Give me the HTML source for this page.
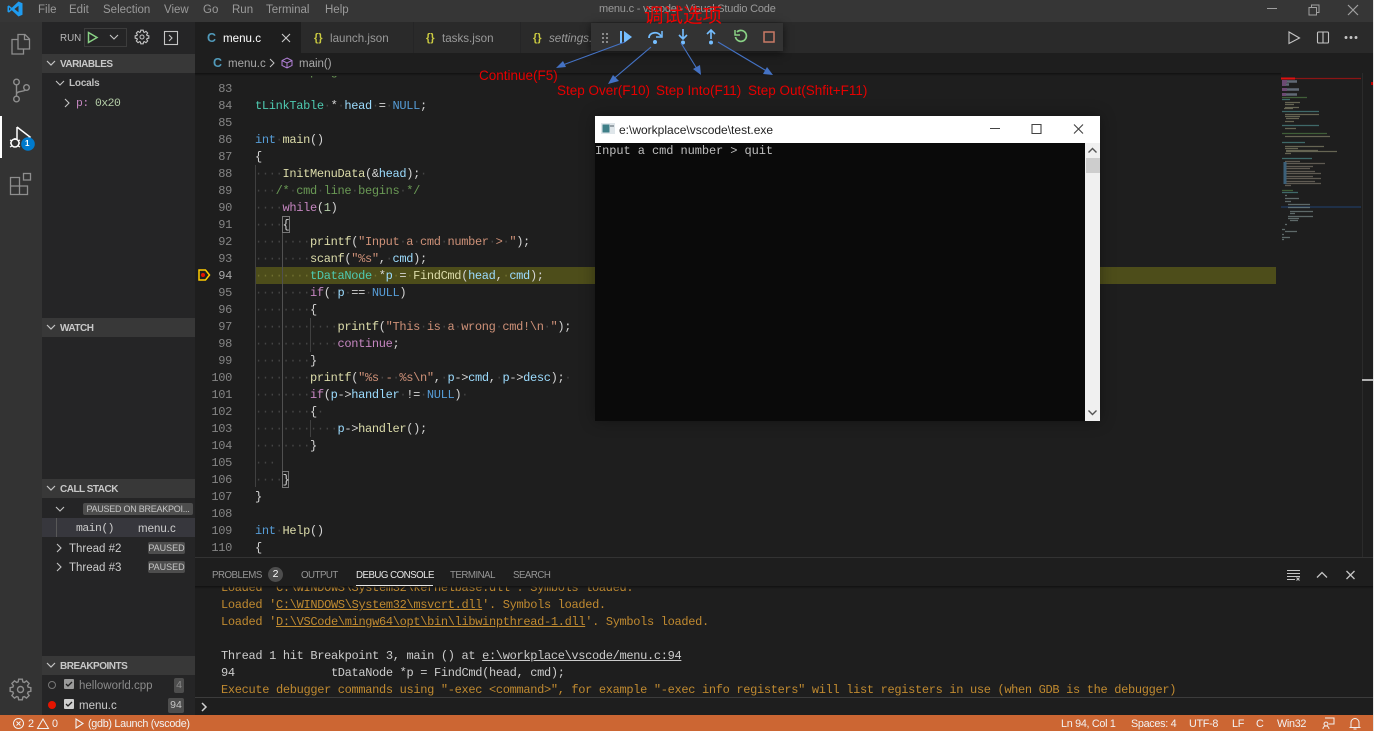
<!DOCTYPE html>
<html><head><meta charset="utf-8"><title>menu.c - vscode - Visual Studio Code</title>
<style>
html,body{margin:0;padding:0;width:1374px;height:731px;overflow:hidden;background:#1e1e1e}
body{position:relative;font-family:"Liberation Sans","Noto Sans CJK SC",sans-serif;color:#ccc}
.a{position:absolute}
.t{position:absolute;white-space:pre;line-height:16px}
svg{position:absolute;overflow:visible}
.m{font-family:"Liberation Mono",monospace;font-size:12px;letter-spacing:-.33px;line-height:17px;white-space:pre}
.w{color:#454545}.ty{color:#4ec9b0}.k{color:#569cd6}.c{color:#c586c0}.f{color:#dcdcaa}.v{color:#9cdcfe}.s{color:#ce9178}.g{color:#6a9955}.n{color:#b5cea8}
.hd{position:absolute;left:42px;width:153px;height:19px;background:#383838;font-size:10px;letter-spacing:-.5px;font-weight:bold;line-height:19px;color:#c8c8c8}
.hd span{position:absolute;left:18px;top:.5px}
.mn{position:absolute;top:1.500px;font-size:11.500px;line-height:16px;color:#9a9a9a}
.o{color:#c08a30}
.o u,.l u{text-decoration:underline}
.l{color:#cccccc}
.st{position:absolute;top:717px;font-size:10.800px;letter-spacing:-.3px;line-height:15px;color:#f2f2f2;white-space:pre}
.pt{position:absolute;top:568px;font-size:9.700px;letter-spacing:-.5px;line-height:15px;color:#969696;white-space:pre}
.badge{position:absolute;background:#4d4d4d;color:#c4c4c4;font-size:9px;line-height:12px;text-align:center;border-radius:2px;white-space:pre}
.tb{font-size:11.600px}
</style></head><body>

<!-- title bar -->
<div class="a" style="left:0;top:0;width:1374px;height:22px;background:#363636"></div>
<svg style="left:7px;top:1px" width="16" height="16" viewBox="0 0 16 16"><path d="M11.500 .5 L15.500 2.300 V13.700 L11.500 15.500 L4.800 9.300 L1.900 11.600 L.5 10.800 V5.200 L1.900 4.400 L4.800 6.700 Z M11.500 4.800 L7.400 8 L11.500 11.200 Z M2 6.300 V9.700 L3.700 8 Z" fill="#1f9cf0" fill-rule="evenodd"/></svg>
<div class="mn" style="left:38px">File</div><div class="mn" style="left:69px">Edit</div><div class="mn" style="left:103px">Selection</div><div class="mn" style="left:164px">View</div><div class="mn" style="left:203px">Go</div><div class="mn" style="left:232px">Run</div><div class="mn" style="left:266px">Terminal</div><div class="mn" style="left:325px">Help</div>
<div class="t" style="left:599px;top:1px;font-size:11px;letter-spacing:-.2px;color:#9a9a9a">menu.c - vscode - Visual Studio Code</div>
<svg style="left:1266px;top:3px" width="100" height="14" fill="none" stroke="#a0a0a0"><path d="M1 5.500H11"/><path d="M43 4.500h7.500v7.500H43z M45.500 4.500V2h7.500v7.500h-2.500"/><path d="M82 2L92 12M92 2L82 12" stroke-width="1.200"/></svg>

<!-- activity bar -->
<div class="a" style="left:0;top:22px;width:42px;height:693px;background:#333"></div>
<div class="a" style="left:0;top:116px;width:2px;height:42px;background:#fff"></div>
<svg style="left:10px;top:33px" width="22" height="22" fill="none" stroke="#8e8e8e" stroke-width="1.300"><path d="M8 1.500h7l4.500 4.500V16H8z M14.500 1.500V6.500H19.500"/><path d="M8 6.500H2v14.500h11.500V16"/></svg>
<svg style="left:12px;top:78px" width="20" height="24" fill="none" stroke="#8e8e8e" stroke-width="1.400"><circle cx="4.500" cy="4" r="2.800"/><circle cx="4.500" cy="21" r="2.800"/><circle cx="14.500" cy="9.500" r="2.800"/><path d="M4.500 7V18M4.500 16C5 12.500 12 14 13.500 12"/></svg>
<svg style="left:9px;top:125px" width="30" height="30" fill="none"><path d="M8 2V14M8 2L21 12 L17 15" stroke="#fff" stroke-width="1.500"/><circle cx="6" cy="18" r="4" stroke="#fff" stroke-width="1.500"/><path d="M1 15l2 1M1 18h1M1 22l2-1M11 15l-2 1M11 18h-1M11 22l-2-1M6 13v2" stroke="#fff" stroke-width="1.200"/><circle cx="19" cy="19" r="6.800" fill="#007acc"/></svg>
<div class="t" style="left:25px;top:136px;width:6px;font-size:8px;font-weight:bold;color:#fff">1</div>
<svg style="left:10px;top:172px" width="23" height="23" fill="none" stroke="#8e8e8e" stroke-width="1.300"><path d="M.5 5.500h9v17h-9zM.5 14h17v8.500h-8"/><rect x="13.500" y="1.500" width="7" height="6.500"/></svg>
<svg style="left:9px;top:678px" width="23" height="23" viewBox="0 0 23 23" fill="none" stroke="#8e8e8e" stroke-width="1.400"><circle cx="11.500" cy="11.500" r="3"/><polygon transform="translate(11.500 11.500)" points="-1.820,-10.340 1.820,-10.340 2.340,-7.650 3.760,-7.060 6.020,-8.600 8.600,-6.020 7.060,-3.760 7.650,-2.340 10.340,-1.820 10.340,1.820 7.650,2.340 7.060,3.760 8.600,6.020 6.020,8.600 3.760,7.060 2.340,7.650 1.820,10.340 -1.820,10.340 -2.340,7.650 -3.760,7.060 -6.020,8.600 -8.600,6.020 -7.060,3.760 -7.650,2.340 -10.340,1.820 -10.340,-1.820 -7.650,-2.340 -7.060,-3.760 -8.600,-6.020 -6.020,-8.600 -3.760,-7.060 -2.340,-7.650"/></svg>

<!-- sidebar -->
<div class="a" style="left:42px;top:22px;width:153px;height:693px;background:#252526"></div>
<div class="t" style="left:60px;top:31px;font-size:9.800px;color:#b8b8b8">RUN</div>
<div class="a" style="left:84px;top:28px;width:43px;height:19px;border:1px solid #3c3c3c;box-sizing:border-box"></div>
<svg style="left:87px;top:31px" width="12" height="13" fill="none"><path d="M1.500 1.500V11.500L10 6.500Z" stroke="#89d185" stroke-width="1.500"/></svg>
<svg style="left:109px;top:34px" width="10" height="7" fill="none"><path d="M1 1L5 5L9 1" stroke="#c5c5c5" stroke-width="1.100"/></svg>
<svg style="left:135px;top:30px" width="14" height="14" fill="none" stroke="#c5c5c5"><circle cx="7" cy="7" r="2"/><polygon transform="translate(7 7) scale(.66)" stroke-width="1.700" points="-1.820,-10.340 1.820,-10.340 2.340,-7.650 3.760,-7.060 6.020,-8.600 8.600,-6.020 7.060,-3.760 7.650,-2.340 10.340,-1.820 10.340,1.820 7.650,2.340 7.060,3.760 8.600,6.020 6.020,8.600 3.760,7.060 2.340,7.650 1.820,10.340 -1.820,10.340 -2.340,7.650 -3.760,7.060 -6.020,8.600 -8.600,6.020 -7.060,3.760 -7.650,2.340 -10.340,1.820 -10.340,-1.820 -7.650,-2.340 -7.060,-3.760 -8.600,-6.020 -6.020,-8.600 -3.760,-7.060 -2.340,-7.650"/></svg>
<svg style="left:164px;top:31px" width="14" height="14" fill="none" stroke="#c5c5c5" stroke-width="1.100"><rect x=".5" y=".5" width="13" height="13"/><path d="M5 4l3 3-3 3"/></svg>

<div class="hd" style="top:54px"><span>VARIABLES</span></div>
<svg style="left:46px;top:60px" width="10" height="7" fill="none"><path d="M1 1L5 5L9 1" stroke="#c5c5c5" stroke-width="1.200"/></svg>
<svg style="left:55px;top:80px" width="10" height="7" fill="none"><path d="M1 1L5 5L9 1" stroke="#c5c5c5" stroke-width="1.100"/></svg>
<div class="t" style="left:69px;top:76px;font-size:10px;letter-spacing:-.2px;font-weight:bold;color:#c0c0c0">Locals</div>
<svg style="left:64px;top:98px" width="7" height="10" fill="none"><path d="M1 1L5 5L1 9" stroke="#c5c5c5" stroke-width="1.100"/></svg>
<div class="t" style="left:76px;top:96px;font-family:'Liberation Mono',monospace;font-size:11.400px;letter-spacing:-.5px"><span style="color:#c586c0">p:</span> <span style="color:#b5cea8">0x20</span></div>

<div class="hd" style="top:318px"><span>WATCH</span></div>
<svg style="left:46px;top:324px" width="10" height="7" fill="none"><path d="M1 1L5 5L9 1" stroke="#c5c5c5" stroke-width="1.200"/></svg>

<div class="hd" style="top:479px"><span>CALL STACK</span></div>
<svg style="left:46px;top:485px" width="10" height="7" fill="none"><path d="M1 1L5 5L9 1" stroke="#c5c5c5" stroke-width="1.200"/></svg>
<svg style="left:55px;top:506px" width="10" height="7" fill="none"><path d="M1 1L5 5L9 1" stroke="#c5c5c5" stroke-width="1.100"/></svg>
<div class="badge" style="left:83px;top:503px;width:110px;height:12px;letter-spacing:-.25px">PAUSED ON BREAKPOI...</div>
<div class="a" style="left:42px;top:518px;width:153px;height:19px;background:#37373d"></div>
<div class="a" style="left:56px;top:518px;width:1px;height:19px;background:#585858"></div>
<div class="t" style="left:76px;top:521px;font-family:'Liberation Mono',monospace;font-size:11.400px;letter-spacing:-.5px;color:#ccc">main()</div>
<div class="t" style="left:138px;top:521px;font-size:11.500px;color:#ccc">menu.c</div>
<svg style="left:56px;top:543px" width="7" height="10" fill="none"><path d="M1 1L5 5L1 9" stroke="#c5c5c5" stroke-width="1.100"/></svg>
<svg style="left:56px;top:562px" width="7" height="10" fill="none"><path d="M1 1L5 5L1 9" stroke="#c5c5c5" stroke-width="1.100"/></svg>
<div class="t" style="left:69px;top:541px;font-size:11.500px;color:#ccc">Thread #2</div>
<div class="t" style="left:69px;top:560px;font-size:11.500px;color:#ccc">Thread #3</div>
<div class="badge" style="left:148px;top:542px;width:37px;height:12px">PAUSED</div>
<div class="badge" style="left:148px;top:561px;width:37px;height:12px">PAUSED</div>

<div class="hd" style="top:656px"><span>BREAKPOINTS</span></div>
<svg style="left:46px;top:662px" width="10" height="7" fill="none"><path d="M1 1L5 5L9 1" stroke="#c5c5c5" stroke-width="1.200"/></svg>
<div class="a" style="left:48px;top:681px;width:8px;height:8px;border:1px solid #777;border-radius:50%;box-sizing:border-box"></div>
<div class="a" style="left:48px;top:701px;width:8px;height:8px;background:#e51400;border-radius:50%"></div>
<svg style="left:64px;top:679px" width="11" height="31"><rect width="10" height="10" rx="1" fill="#9a9a9a"/><path d="M2 5l2 2 4-4" stroke="#222" fill="none" stroke-width="1.300"/><rect y="20" width="10" height="10" rx="1" fill="#cfcfcf"/><path d="M2 25l2 2 4-4" stroke="#222" fill="none" stroke-width="1.300"/></svg>
<div class="t" style="left:79px;top:678px;font-size:11.500px;color:#8b8b8b">helloworld.cpp</div>
<div class="t" style="left:79px;top:698px;font-size:11.500px;color:#ccc">menu.c</div>
<div class="badge" style="left:174px;top:678px;width:10px;height:15px;line-height:15px;font-size:10.500px;color:#8b8b8b">4</div>
<div class="badge" style="left:168px;top:698px;width:16px;height:15px;line-height:15px;font-size:10.500px">94</div>

<!-- tabs -->
<div class="a" style="left:195px;top:22px;width:1179px;height:31px;background:#2a2a2a"></div>
<div class="a" style="left:195px;top:22px;width:106px;height:31px;background:#1e1e1e"></div>
<div class="t" style="left:207px;top:30px;font-size:12.500px;font-weight:bold;color:#519aba">C</div>
<div class="t tb" style="left:223px;top:30.500px;color:#fff">menu.c</div>
<svg style="left:281px;top:33px" width="10" height="10" fill="none" stroke="#ccc" stroke-width="1.100"><path d="M1 1L9 9M9 1L1 9"/></svg>
<div class="t" style="left:314px;top:30px;font-size:11px;font-weight:bold;color:#cbcb41">{}</div>
<div class="t tb" style="left:330px;top:30.500px;color:#9a9a9a">launch.json</div>
<div class="a" style="left:413px;top:22px;width:1px;height:31px;background:#252526"></div>
<div class="t" style="left:426px;top:30px;font-size:11px;font-weight:bold;color:#cbcb41">{}</div>
<div class="t tb" style="left:442px;top:30.500px;color:#9a9a9a">tasks.json</div>
<div class="a" style="left:520px;top:22px;width:1px;height:31px;background:#252526"></div>
<div class="t" style="left:533px;top:30px;font-size:11px;font-weight:bold;color:#cbcb41">{}</div>
<div class="t tb" style="left:549px;top:30.500px;font-style:italic;color:#9a9a9a">settings.json</div>
<svg style="left:1288px;top:31px" width="70" height="14" fill="none" stroke="#c5c5c5" stroke-width="1.100"><path d="M1 1V12.500L11.500 7Z"/><rect x="29.500" y="1" width="11" height="11" rx="1"/><path d="M35 1V12"/><circle cx="58" cy="6.500" r=".9" fill="#c5c5c5"/><circle cx="63" cy="6.500" r=".9" fill="#c5c5c5"/><circle cx="68" cy="6.500" r=".9" fill="#c5c5c5"/></svg>

<!-- breadcrumb -->
<div class="a" style="left:195px;top:53px;width:1179px;height:20px;background:#1e1e1e"></div>
<div class="t" style="left:213px;top:55px;font-size:12.500px;font-weight:bold;color:#519aba">C</div>
<div class="t" style="left:228px;top:56px;font-size:11.500px;color:#a8a8a8">menu.c</div>
<svg style="left:269px;top:58px" width="7" height="10" fill="none"><path d="M1 1L5 5L1 9" stroke="#c5c5c5"/></svg>
<svg style="left:281px;top:57px" width="12" height="12" fill="none" stroke="#b180d7"><path d="M6 1L11 3.500V8.500L6 11L1 8.500V3.500Z M1 3.500L6 6L11 3.500M6 6V11"/></svg>
<div class="t" style="left:299px;top:56px;font-size:11.500px;color:#a8a8a8">main()</div>

<!-- editor -->
<div class="a" style="left:195px;top:73px;width:1179px;height:484px;background:#1e1e1e;overflow:hidden">
  <div class="a" style="left:60px;top:194px;width:1021px;height:17px;background:#4d4d1a"></div>
  <div class="a" style="left:60px;top:92px;width:1px;height:322px;background:#404040"></div>
  <div class="a" style="left:87px;top:143px;width:1px;height:271px;background:#505050"></div>
  <div class="a" style="left:115px;top:245px;width:1px;height:34px;background:#404040"></div>
  <div class="a" style="left:115px;top:347px;width:1px;height:17px;background:#404040"></div>
  <div class="a" style="left:87px;top:143px;width:8px;height:17px;box-sizing:border-box;border:1px solid #777"></div>
  <div class="a" style="left:87px;top:398px;width:7px;height:17px;box-sizing:border-box;border:1px solid #777"></div>
  <div class="a m" style="left:0;top:-9px;width:37px;text-align:right;color:#858585">82
83
84
85
86
87
88
89
90
91
92
93
<span style="color:#a8a8a8">94</span>
95
96
97
98
99
100
101
102
103
104
105
106
107
108
109
110
111</div>
  <div class="a m" style="left:60px;top:-9px;color:#d4d4d4"><span class="g">/*·menu·program·*/</span>

<span class="ty">tLinkTable</span><span class="w">·</span>*<span class="w">·</span><span class="v">head</span><span class="w">·</span>=<span class="w">·</span><span class="k">NULL</span>;

<span class="k">int</span><span class="w">·</span><span class="f">main</span>()
{
<span class="w">····</span><span class="f">InitMenuData</span>(&amp;<span class="v">head</span>);<span class="w">·</span>
<span class="w">···</span><span class="g">/*</span><span class="w">·</span><span class="g">cmd</span><span class="w">·</span><span class="g">line</span><span class="w">·</span><span class="g">begins</span><span class="w">·</span><span class="g">*/</span>
<span class="w">····</span><span class="c">while</span>(<span class="n">1</span>)
<span class="w">····</span>{
<span class="w">········</span><span class="f">printf</span>(<span class="s">"Input</span><span class="w">·</span><span class="s">a</span><span class="w">·</span><span class="s">cmd</span><span class="w">·</span><span class="s">number</span><span class="w">·</span><span class="s">&gt;</span><span class="w">·</span><span class="s">"</span>);
<span class="w">········</span><span class="f">scanf</span>(<span class="s">"%s"</span>,<span class="w">·</span><span class="v">cmd</span>);
<span class="w" style="color:#707030">········</span><span class="ty">tDataNode</span><span class="w" style="color:#707030">·</span>*<span class="v">p</span><span class="w" style="color:#707030">·</span>=<span class="w" style="color:#707030">·</span><span class="f">FindCmd</span>(<span class="v">head</span>,<span class="w" style="color:#707030">·</span><span class="v">cmd</span>);
<span class="w">········</span><span class="c">if</span>(<span class="w">·</span><span class="v">p</span><span class="w">·</span>==<span class="w">·</span><span class="k">NULL</span>)
<span class="w">········</span>{
<span class="w">············</span><span class="f">printf</span>(<span class="s">"This</span><span class="w">·</span><span class="s">is</span><span class="w">·</span><span class="s">a</span><span class="w">·</span><span class="s">wrong</span><span class="w">·</span><span class="s">cmd!\n</span><span class="w">·</span><span class="s">"</span>);
<span class="w">············</span><span class="c">continue</span>;
<span class="w">········</span>}
<span class="w">········</span><span class="f">printf</span>(<span class="s">"%s</span><span class="w">·</span><span class="s">-</span><span class="w">·</span><span class="s">%s\n"</span>,<span class="w">·</span><span class="v">p</span>-&gt;<span class="v">cmd</span>,<span class="w">·</span><span class="v">p</span>-&gt;<span class="v">desc</span>);<span class="w">·</span>
<span class="w">········</span><span class="c">if</span>(<span class="v">p</span>-&gt;<span class="v">handler</span><span class="w">·</span>!=<span class="w">·</span><span class="k">NULL</span>)<span class="w">·</span>
<span class="w">········</span>{<span class="w">·</span>
<span class="w">············</span><span class="v">p</span>-&gt;<span class="f">handler</span>();
<span class="w">········</span>}
<span class="w">···</span>
<span class="w">····</span>}
}

<span class="k">int</span><span class="w">·</span><span class="f">Help</span>()
{
</div>
  <!-- overview ruler -->
  <div class="a" style="left:1167px;top:0;width:1px;height:484px;background:#2b2b2b"></div>
  <div class="a" style="left:1167px;top:306px;width:12px;height:2px;background:#b0b0b0"></div>
  <div class="a" style="left:1176px;top:9px;width:3px;height:3px;background:#c00000"></div>
  <div class="a" style="left:0;top:0;width:1086px;height:3px;background:linear-gradient(#111,#1e1e1e)"></div>
</div>
<!-- bp arrow -->
<svg style="left:198px;top:269px" width="13" height="12" fill="none"><path d="M1 1H7.500L11.500 6L7.500 11H1Z" stroke="#ffcc00" stroke-width="1.500"/><circle cx="5" cy="6" r="2" fill="#e51400"/></svg>

<!-- minimap -->
<svg style="left:0;top:0" width="1374" height="731" fill="none" stroke-width="1.300">
<path d="M1281 78.500H1361" stroke="#8a1515"/><path d="M1281 78.500H1295" stroke="#e01010" stroke-width="2"/>
<rect x="1281" y="206" width="80" height="2" fill="#1f3048" stroke="none"/>
<g opacity=".7">
<path d="M1282 81.500h5M1282 84.500h4M1282 89.500h5M1282 94.500h4" stroke="#8d5d96" stroke-width="3"/>
<path d="M1287 81.500h10M1286 84.500h3M1287 89.500h12M1286 94.500h11" stroke="#7d8a9a" stroke-width="2.500"/>
<path d="M1282 97.500h25M1282 133.500h45M1282 190.500h11" stroke="#4f7a43"/>
<path d="M1282 99.500h8M1282 111.500h37M1282 125.500h37M1282 142.500h23M1282 158.500h30M1282 192.500h16" stroke="#4e8a8a"/>
<path d="M1285 102.500h15M1285 104.500h9M1285 107.500h14M1284 108.500h9M1285 114.500h34M1285 116.500h15M1286 118.500h13M1285 121.500h9M1285 128.500h11M1285 136.500h45M1285 146.500h39M1285 148.500h13M1286 150.500h32M1286 151.500h51M1285 153.500h6" stroke="#85846a"/>
<path d="M1285 161.500h15M1285 163.500h40M1285 166.500h28M1285 168.500h25M1285 171.500h30M1285 173.500h36M1285 176.500h28M1285 178.500h36M1285 181.500h30M1285 183.500h36M1285 185.500h6" stroke="#7b7468"/>
<path d="M1285 162v22" stroke="#4a7ca0" stroke-width="3"/>
<path d="M1285 195.500h2M1285 198.500h14M1285 201.500h6M1288 204.500h22M1288 207.500h22M1290 211.500h23M1290 213.500h5M1288 216.500h25M1288 218.500h11M1290 220.500h8M1285 224.500h2M1282 229.500h3M1285 231.500h12M1282 234.500h2M1282 237.500h8M1282 239.500h2" stroke="#7a8a8a"/>
</g>
</svg>

<!-- panel -->
<div class="a" style="left:195px;top:557px;width:1179px;height:141px;background:#1e1e1e;border-top:1px solid #333;box-sizing:border-box"></div>
<div class="pt" style="left:212px">PROBLEMS</div>
<div class="a" style="left:268px;top:567px;width:15px;height:15px;border-radius:50%;background:#4d4d4d;color:#fff;font-size:10.500px;line-height:15px;text-align:center">2</div>
<div class="pt" style="left:301px">OUTPUT</div>
<div class="pt" style="left:356px;color:#e7e7e7">DEBUG CONSOLE</div>
<div class="a" style="left:356px;top:585px;width:77px;height:1px;background:#e7e7e7"></div>
<div class="pt" style="left:450px">TERMINAL</div>
<div class="pt" style="left:513px">SEARCH</div>
<svg style="left:1286px;top:569px" width="72" height="12" fill="none" stroke="#c5c5c5" stroke-width="1.100"><path d="M1 1.500H14M1 4.500H14M1 7.500H14M1 10.500H9M10.500 8.500l3 3M13.500 8.500l-3 3"/><path d="M31 8.500L36 3.500L41 8.500" stroke-width="1.300"/><path d="M60.500 2L68.500 10M68.500 2L60.500 10" stroke-width="1.300"/></svg>

<div class="a" style="left:195px;top:586px;width:1179px;height:111px;overflow:hidden">
  <div class="a m" style="left:26px;top:-6px;color:#ccc"><span class="o">Loaded 'C:\WINDOWS\System32\kernelbase.dll'. Symbols loaded.</span>
<span class="o">Loaded '<u>C:\WINDOWS\System32\msvcrt.dll</u>'. Symbols loaded.</span>
<span class="o">Loaded '<u>D:\VSCode\mingw64\opt\bin\libwinpthread-1.dll</u>'. Symbols loaded.</span>

<span class="l">Thread 1 hit Breakpoint 3, main () at <u>e:\workplace\vscode/menu.c:94</u></span>
<span class="l">94              tDataNode *p = FindCmd(head, cmd);</span>
<span class="o">Execute debugger commands using "-exec &lt;command&gt;", for example "-exec info registers" will list registers in use (when GDB is the debugger)</span></div>
  <div class="a" style="left:0;top:0;width:1179px;height:3px;background:linear-gradient(#111,rgba(30,30,30,0))"></div>
</div>
<div class="a" style="left:195px;top:697px;width:1179px;height:18px;background:#1e1e1e;border-top:1px solid #3c3c3c;box-sizing:border-box"></div>
<svg style="left:201px;top:702px" width="8" height="10" fill="none"><path d="M1 1L5 5L1 9" stroke="#d0d0d0" stroke-width="1.500"/></svg>

<!-- status bar -->
<div class="a" style="left:0;top:715px;width:1374px;height:16px;background:#cc6633"></div>
<svg style="left:13px;top:718px" width="46" height="12" fill="none" stroke="#f2f2f2"><circle cx="5.500" cy="5.500" r="5"/><path d="M3.500 3.500l4 4M7.500 3.500l-4 4"/><path d="M30 1L35.500 10.500H24.500Z"/></svg>
<div class="st" style="left:28px">2</div>
<div class="st" style="left:52px">0</div>
<svg style="left:75px;top:718px" width="9" height="11" fill="none"><path d="M1 1V10L8 5.500Z" stroke="#f2f2f2" stroke-width="1.100"/></svg>
<div class="st" style="left:88px">(gdb) Launch (vscode)</div>
<div class="st" style="left:1061px">Ln 94, Col 1</div>
<div class="st" style="left:1131px">Spaces: 4</div>
<div class="st" style="left:1189px">UTF-8</div>
<div class="st" style="left:1232px">LF</div>
<div class="st" style="left:1256px">C</div>
<div class="st" style="left:1277px">Win32</div>
<svg style="left:1322px;top:717px" width="40" height="13" fill="none" stroke="#f2f2f2"><path d="M3 1h9v6h-5M4 5a2 2 0 1 0 .01 0M1 12c0-2 1.500-3 3-3s3 1 3 3"/><path d="M29 10.500V5.500a4 4 0 0 1 8 0v5M27.500 10.500h11M31.500 12h3"/></svg>

<!-- debug toolbar -->
<div class="a" style="left:591px;top:23px;width:192px;height:28px;background:#333;box-shadow:0 2px 8px rgba(0,0,0,.6)"></div>
<svg style="left:591px;top:23px" width="192" height="28" fill="none">
<g fill="#8a8a8a"><rect x="11" y="10" width="2" height="2"/><rect x="15" y="10" width="2" height="2"/><rect x="11" y="14" width="2" height="2"/><rect x="15" y="14" width="2" height="2"/><rect x="11" y="18" width="2" height="2"/><rect x="15" y="18" width="2" height="2"/></g>
<path d="M30 8V20" stroke="#75beff" stroke-width="2"/><path d="M33 8L41 14L33 20Z" fill="#75beff"/>
<path d="M58 15C58 9 67 8 70 13" stroke="#75beff" stroke-width="1.800"/><path d="M71 8V14H65" stroke="#75beff" stroke-width="1.500"/><circle cx="64" cy="19" r="2" fill="#75beff"/>
<path d="M92 6V15M88 12L92 16L96 12" stroke="#75beff" stroke-width="1.600"/><circle cx="92" cy="19.500" r="2" fill="#75beff"/>
<path d="M120 7V16M116 11L120 7L124 11" stroke="#75beff" stroke-width="1.600"/><circle cx="120" cy="19.500" r="2" fill="#75beff"/>
<path d="M146 9A5.500 5.500 0 1 1 144.500 14" stroke="#89d185" stroke-width="1.700"/><path d="M144 7V12H149" stroke="#89d185" stroke-width="1.500"/>
<rect x="173" y="9" width="10" height="10" stroke="#c97a66" stroke-width="1.500"/>
</svg>

<!-- console window -->
<div class="a" style="left:595px;top:116px;width:505px;height:305px;background:#fff;box-shadow:0 0 14px rgba(0,0,0,.35)"></div>
<svg style="left:601px;top:123px" width="14" height="11"><rect width="14" height="11" fill="#dfe6ea"/><rect x="1.500" y="1.500" width="7" height="8" fill="#3f7f88"/><rect x="9" y="2" width="4" height="2" fill="#98a2a8"/></svg>
<div class="t" style="left:619px;top:122px;font-size:12px;color:#222">e:\workplace\vscode\test.exe</div>
<svg style="left:985px;top:123px" width="100" height="12" fill="none" stroke="#444" stroke-width="1.100"><path d="M5 5.500H15M47 1.500h9v9h-9z"/><path d="M89 1.500L98 10.500M98 1.500L89 10.500"/></svg>
<div class="a" style="left:595px;top:143px;width:490px;height:278px;background:#0a0a0a"></div>
<div class="a" style="left:1085px;top:143px;width:15px;height:278px;background:#f0f0f0"></div>
<div class="a" style="left:1086px;top:158px;width:14px;height:15px;background:#cdcdcd"></div>
<svg style="left:1087px;top:146px" width="11" height="271" fill="none" stroke="#555" stroke-width="1.400"><path d="M1.500 6.500L5.500 2.500L9.500 6.500"/><path d="M1.500 264.500L5.500 268.500L9.500 264.500"/></svg>
<div class="t" style="left:595px;top:143px;font-family:'Liberation Mono',monospace;font-size:12px;letter-spacing:-.08px;color:#bdbdbd">Input a cmd number &gt; quit</div>

<!-- annotations -->
<svg style="left:0;top:0" width="1374" height="731" fill="none">
<g stroke="#4472c4" stroke-width="1.100">
<path d="M625 42L560 66"/><path d="M651 47L611 81"/><path d="M681 43L699 72"/><path d="M718 42L770 73"/>
</g>
<g fill="#4472c4">
<path d="M556 68L563 61L566 67Z"/><path d="M608 84L613 75L619 81Z"/><path d="M701 75L693 69L700 65Z"/><path d="M773 75L763 74L767 67Z"/>
</g>
</svg>
<div class="t" style="left:644px;top:4px;font-size:19.500px;line-height:20px;color:#f00000;font-family:'Noto Sans CJK SC',sans-serif;font-weight:400">调试选项</div>
<div class="t" style="left:479px;top:68px;font-size:13.500px;color:#e60000">Continue(F5)</div>
<div class="t" style="left:557px;top:83px;font-size:13.500px;color:#e60000">Step Over(F10)</div>
<div class="t" style="left:656px;top:83px;font-size:13.500px;color:#e60000">Step Into(F11)</div>
<div class="t" style="left:748px;top:83px;font-size:13.500px;color:#e60000">Step Out(Shfit+F11)</div>
<div class="a" style="left:1373px;top:0;width:1px;height:731px;background:#e8e8e8"></div>
</body></html>
